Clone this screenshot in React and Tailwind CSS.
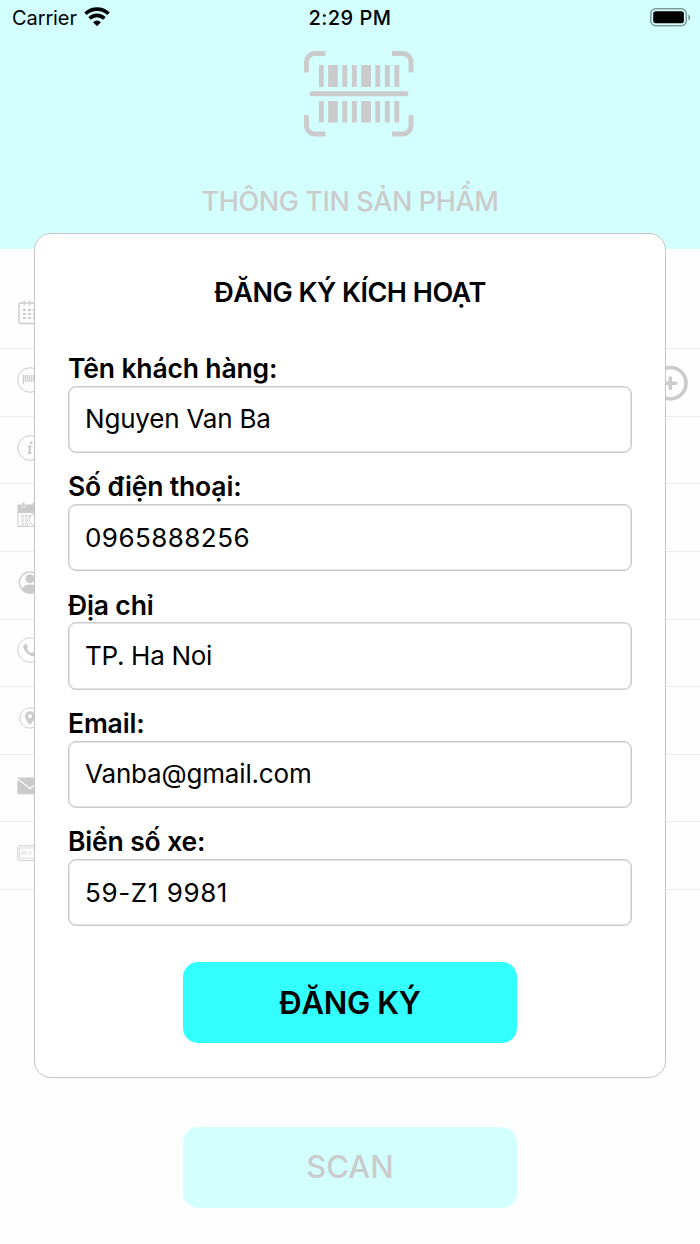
import React from 'react';

// form fields of the registration dialog
const fields = [
  { label: 'Tên khách hàng:', value: 'Nguyen Van Ba', valueClass: 'tracking-[-0.2px]' },
  { label: 'Số điện thoại:', value: '0965888256', valueClass: 'tracking-[0.45px]' },
  { label: 'Địa chỉ', value: 'TP. Ha Noi', valueClass: 'tracking-[-0.3px]' },
  { label: 'Email:', value: 'Vanba@gmail.com', valueClass: 'tracking-[-0.17px]' },
  { label: 'Biển số xe:', value: '59-Z1 9981', valueClass: 'tracking-[0.6px]' },
];

function RowIcon({ children }) {
  return (
    <svg viewBox="0 0 26 26" className="h-[26px] w-[26px]" fill="none" stroke="#cbcbcb" strokeWidth="1">
      {children}
    </svg>
  );
}

const rowIcons = [
  // calendar
  <RowIcon key="calendar">
    <rect x="2" y="4" width="22" height="20.5" rx="1.5" strokeWidth="1.4" />
    <path d="M7.2 1.5v5M12.7 1.5v5M18.2 1.5v5" strokeWidth="1.4" />
    <path d="M6 11h14M6 15h14M6 19h14" strokeWidth="2.2" strokeDasharray="2.8 2.2" />
  </RowIcon>,
  // barcode
  <RowIcon key="barcode">
    <circle cx="13" cy="13" r="12.3" />
    <path d="M6.3 8v9M8.3 8v7M10.3 8v7M12.3 8v7M14.3 8v7M16.3 8v7" strokeWidth="1.2" />
  </RowIcon>,
  // info
  <RowIcon key="info">
    <circle cx="13" cy="13" r="12.3" />
    <circle cx="14.2" cy="7.8" r="1.5" fill="#cbcbcb" stroke="none" />
    <path d="M10.8 11.5h2.5l-1.3 6.6h2.4" strokeWidth="2" />
  </RowIcon>,
  // calendar with clock
  <RowIcon key="schedule">
    <path d="M0.5 2.5h25V11h-25z" fill="#cbcbcb" stroke="none" />
    <path d="M1 10v14.5h24V10" />
    <path d="M6.5 0.5v4M17 0.5v4" strokeWidth="2.2" />
    <path d="M5 1v4.5h3.2V1" stroke="#fff" strokeWidth="0.5" />
    <path
      d="M4.5 13h2.2v2.2H4.5zM4.5 17h2.2v2.2H4.5zM4.5 21h2.2v2.2H4.5zM8.5 13h2.2v2.2H8.5zM8.5 17h2.2v2.2H8.5zM8.5 21h2.2v2.2H8.5zM12.5 13h2.2v2.2h-2.2z"
      strokeWidth="0.7"
    />
    <circle cx="18.5" cy="17.5" r="6" fill="#fff" />
  </RowIcon>,
  // customer
  <RowIcon key="user">
    <circle cx="13" cy="12.5" r="10.6" strokeWidth="1.3" />
    <circle cx="13" cy="8.7" r="4.5" fill="#cbcbcb" stroke="none" />
    <path d="M5 19.5c1-4 4-5 8-5s7 1 8 5c-2 2.5-5 4-8 4s-6-1.5-8-4z" fill="#cbcbcb" stroke="none" />
  </RowIcon>,
  // phone
  <RowIcon key="phone">
    <circle cx="13" cy="13" r="12.3" strokeWidth="0.9" />
    <path d="M8.5 6.5c-3 1.5-3 4.5 0.5 8.5s7.5 5.5 10 3l-2.5-3-2.500 1c-2-1-3.5-3-4-4.5l1-2z" fill="#cbcbcb" stroke="none" />
  </RowIcon>,
  // address pin
  <RowIcon key="pin">
    <circle cx="13" cy="13" r="10.2" strokeWidth="0.9" />
    <path d="M13 20c-2-3-5-5.500-5-8.700a5 5 0 0 1 10 0c0 3.200-3 5.700-5 8.700z" fill="#cbcbcb" stroke="none" />
    <circle cx="13" cy="11.3" r="2" fill="#fff" stroke="none" />
  </RowIcon>,
  // mail
  <RowIcon key="mail">
    <rect x="0.3" y="4.5" width="25.4" height="16.8" rx="1.5" fill="#cbcbcb" stroke="none" />
    <path d="M0 5.5l13 10 13-10" stroke="#fff" strokeWidth="1.3" />
  </RowIcon>,
  // licence plate
  <RowIcon key="plate">
    <rect x="0.7" y="5.8" width="24.6" height="14.5" rx="1.5" />
    <rect x="2.7" y="8" width="20.6" height="10" strokeWidth="0.7" />
    <path d="M4 13h6M12 13h2" strokeWidth="4" strokeOpacity="0.5" strokeDasharray="1.5 0.6" />
  </RowIcon>,
];

function StatusBar() {
  return (
    <div className="grid h-9 grid-cols-3 items-center pl-3 pr-2 text-[20px] leading-9 text-black">
      <div className="flex items-center gap-[7px]">
        <span className="tracking-[-0.1px]">Carrier</span>
        <svg viewBox="0 0 26 19" className="mb-[3px] h-[19px] w-[26px]" fill="none" stroke="#000" strokeWidth="3.6">
          <path d="M1.5 6.8a16.5 16.5 0 0 1 23 0M5.6 11.5a10.4 10.4 0 0 1 14.8 0" />
          <path d="M13 19.2l-3.9-4a5.5 5.5 0 0 1 7.8 0z" fill="#000" stroke="none" />
        </svg>
      </div>
      <span className="-ml-1 text-center font-medium tracking-[0.5px]">2:29 PM</span>
      <svg viewBox="0 0 42 20" className="h-5 w-[42px] justify-self-end">
        <rect x="0.8" y="0.8" width="35.5" height="17" rx="5" fill="none" stroke="#7f9999" strokeWidth="1.5" />
        <rect x="3.2" y="3.3" width="30.7" height="12" rx="2.5" />
        <path d="M38.3 6.5c2.500 1 2.500 5 0 6z" fill="#7f9999" />
      </svg>
    </div>
  );
}

function BarcodeScan() {
  return (
    <svg viewBox="0 0 110 86" className="ml-[18px] mt-[15px] h-[86px] w-[110px]" fill="none" stroke="#cbcbcb">
      <path
        d="M2.5 21.5V11a8.5 8.5 0 0 1 8.5-8.5h10.5M88 2.5h10.5a8.5 8.5 0 0 1 8.5 8.5v10.5M2.5 64v10.5a8.5 8.5 0 0 0 8.5 8.5h10.5M88 83h10.5a8.5 8.5 0 0 0 8.5-8.5V64"
        strokeWidth="4.8"
      />
      <path d="M8 42.7h94" strokeWidth="5" strokeLinecap="round" />
      <path
        d="M17.3 14v22M40.8 14v22M50.3 14v22M73.8 14v22M83.3 14v22M92.8 14v22M17.3 50v21.5M40.8 50v21.5M50.3 50v21.5M73.8 50v21.5M83.3 50v21.5M92.8 50v21.5"
        strokeWidth="4.9"
      />
      <path d="M29 14v22M62.100 14v22M29 50v21.500M62.100 50v21.500" strokeWidth="9.8" />
    </svg>
  );
}

function ProductScreen() {
  return (
    <div className="flex h-[1244px] flex-col">
      <header className="flex h-[249px] flex-col bg-[#d4ffff]">
        <StatusBar />
        <div className="flex flex-col items-center text-[#cbcbcb]">
          <BarcodeScan />
          <h1 className="mt-[45px] text-[27px] font-medium leading-10 tracking-[-0.4px]">THÔNG TIN SẢN PHẨM</h1>
        </div>
      </header>
      <ul className="pt-[32.6px]">
        {rowIcons.map((icon, index) => (
          <li key={index} className="flex h-[67.6px] items-start justify-between border-b border-[#ededed] pl-[17px] pr-3 pt-[17.8px]">
            {icon}
            {index === 1 && (
              <svg viewBox="0 0 36 38" className="-mt-[3px] h-[38px] w-9" fill="none" stroke="#cbcbcb" strokeWidth="3.5">
                <circle cx="18.3" cy="19.2" r="15.7" />
                <path d="M13.1 19.2h10.5M18.3 14v10.5" strokeLinecap="round" />
              </svg>
            )}
          </li>
        ))}
      </ul>
      <button className="mx-auto mb-9 mt-auto h-[81px] w-[334px] rounded-[15px] bg-[#d4ffff] text-[31px] font-medium text-[#cbcbcb]">
        SCAN
      </button>
    </div>
  );
}

function RegisterDialog() {
  return (
    <div className="absolute left-[34px] top-[233px] flex h-[845px] w-[632px] flex-col rounded-[17px] border border-[#c4c4c4] bg-white px-[33px] text-black">
      <h2 className="mt-[39px] text-center text-[27px] font-semibold leading-10 tracking-[-0.5px]">ĐĂNG KÝ KÍCH HOẠT</h2>
      <form className="mt-[40px] flex flex-col gap-[18px]">
        {fields.map((field) => (
          <label key={field.label} className="flex h-[100.3px] flex-col">
            <span className="h-[32.7px] text-[26.5px] font-semibold leading-[31px] tracking-[-0.15px]">{field.label}</span>
            <input
              defaultValue={field.value}
              className={`h-[67.5px] w-full rounded-[8px] border border-[#cbcbcb] px-4 pb-px text-[26px] shadow-[inset_0_0_0_0.5px_#cbcbcb] ${field.valueClass}`}
            />
          </label>
        ))}
      </form>
      <button className="mx-auto mb-[34px] mt-auto h-[81px] w-[334px] rounded-[15px] bg-[#33ffff] pt-px text-[31px] font-semibold tracking-[-0.3px]">
        ĐĂNG KÝ
      </button>
    </div>
  );
}

function App() {
  return (
    <main className="relative h-[1244px] w-[700px] overflow-hidden bg-[#fefefe] font-['Inter','Liberation_Sans',sans-serif]">
      <ProductScreen />
      <RegisterDialog />
    </main>
  );
}

export default App;
